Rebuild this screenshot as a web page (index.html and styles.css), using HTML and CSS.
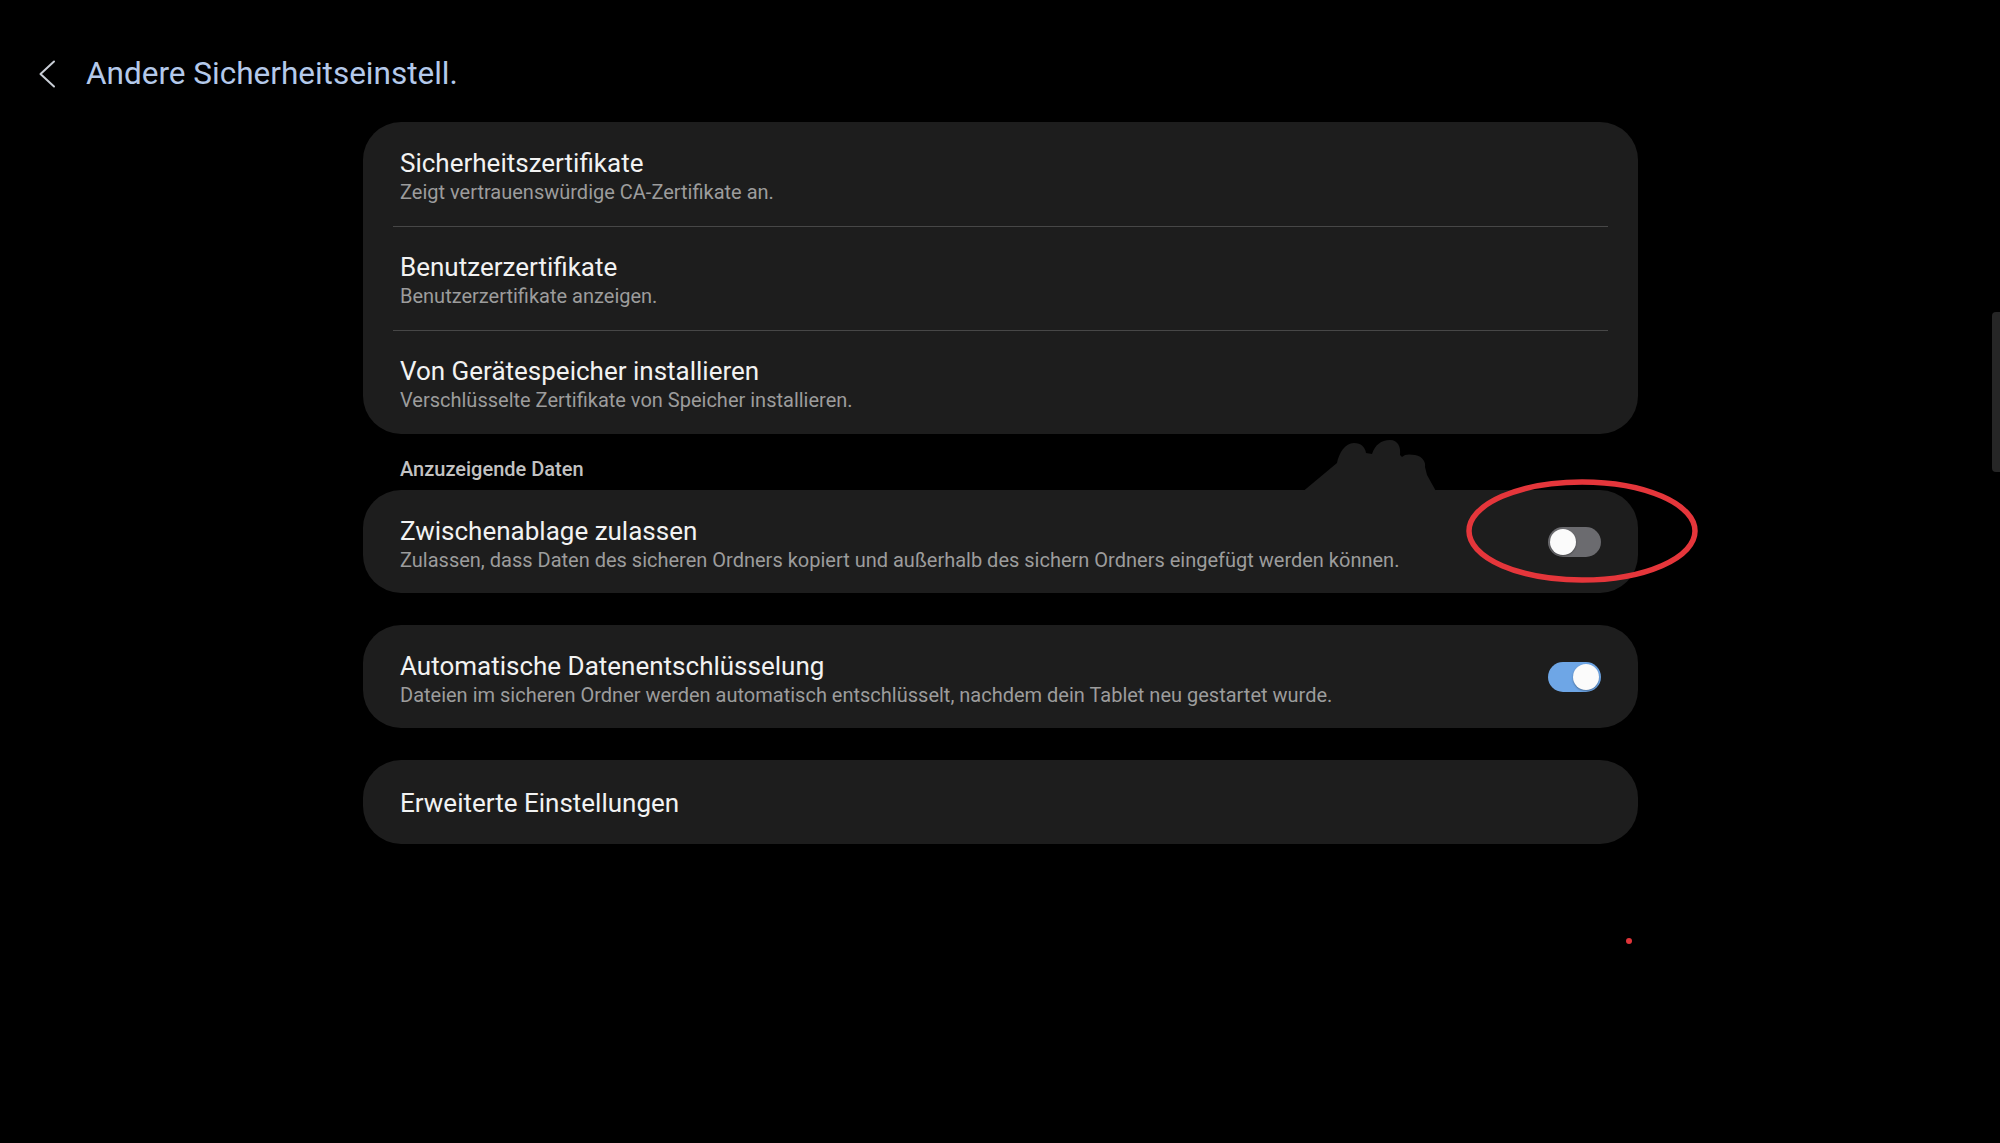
FILE: index.html
```html
<!DOCTYPE html>
<html lang="de">
<head>
<meta charset="utf-8">
<title>Andere Sicherheitseinstell.</title>
<link rel="stylesheet" href="styles.css">
</head>
<body>
<div class="screen">
  <header class="topbar">
    <span class="back" aria-label="Zurück">
      <svg width="18" height="28" viewBox="0 0 18 28"><path d="M16 1.5 L2.5 14 L16 26.5" fill="none" stroke="#c9ced6" stroke-width="2" stroke-linecap="round" stroke-linejoin="round"/></svg>
    </span>
    <h1 class="title">Andere Sicherheitseinstell.</h1>
  </header>

  <main class="content">
    <section class="card card-list">
      <div class="row">
        <div class="row-text">
          <div class="row-title">Sicherheitszertifikate</div>
          <div class="row-sub">Zeigt vertrauenswürdige CA-Zertifikate an.</div>
        </div>
      </div>
      <div class="divider"></div>
      <div class="row">
        <div class="row-text">
          <div class="row-title">Benutzerzertifikate</div>
          <div class="row-sub">Benutzerzertifikate anzeigen.</div>
        </div>
      </div>
      <div class="divider"></div>
      <div class="row">
        <div class="row-text">
          <div class="row-title">Von Gerätespeicher installieren</div>
          <div class="row-sub">Verschlüsselte Zertifikate von Speicher installieren.</div>
        </div>
      </div>
    </section>

    <div class="section-label">Anzuzeigende Daten</div>

    <section class="card card-marked">
      <svg class="hand" width="150" height="62" viewBox="0 0 150 62"><path d="M4 58 L40 28 C42 18 48 8 57 8 C64 8 68 12 69 18 L75 19 C78 10 84 5 93 5 C101 5 104 12 103 20 L105 22 C108 19 112 19 118 20 C126 21 129 28 128 32 L130 40 L140 58 Z" fill="#1d1d1d"/></svg>
      <div class="row row-switch">
        <div class="row-text">
          <div class="row-title">Zwischenablage zulassen</div>
          <div class="row-sub">Zulassen, dass Daten des sicheren Ordners kopiert und außerhalb des sichern Ordners eingefügt werden können.</div>
        </div>
        <span class="toggle"><span class="knob"></span></span>
      </div>
      <svg class="annotation" width="240" height="112" viewBox="0 0 240 112"><ellipse cx="120" cy="56" rx="113" ry="49" fill="none" stroke="#e5363b" stroke-width="5.5"/></svg>
    </section>

    <section class="card">
      <div class="row row-switch">
        <div class="row-text">
          <div class="row-title">Automatische Datenentschlüsselung</div>
          <div class="row-sub">Dateien im sicheren Ordner werden automatisch entschlüsselt, nachdem dein Tablet neu gestartet wurde.</div>
        </div>
        <span class="toggle toggle-on"><span class="knob"></span></span>
      </div>
    </section>

    <section class="card">
      <div class="row row-single">
        <div class="row-title">Erweiterte Einstellungen</div>
      </div>
    </section>
  </main>

  <div class="scrollbar"></div>
  <div class="dot"></div>
</div>
</body>
</html>
```

FILE: styles.css
```css
* { box-sizing: border-box; }

html, body {
  margin: 0;
  padding: 0;
  background: #000;
}

body {
  font-family: Roboto, "Noto Sans", "DejaVu Sans", sans-serif;
  color: #f2f2f2;
}

.screen {
  position: relative;
  width: 2000px;
  height: 1143px;
  overflow: hidden;
  background: #000;
}

.topbar {
  display: flex;
  align-items: center;
  height: 122px;
  padding: 56px 0 30px 38px;
}

.back {
  display: flex;
  width: 18px;
  height: 28px;
  margin-right: 30px;
}

.title {
  margin: 0;
  font-size: 31.5px;
  line-height: 36px;
  font-weight: 400;
  color: #b4c9ea;
}

.content {
  width: 1275px;
  margin-left: 363px;
  display: flex;
  flex-direction: column;
}

.card {
  position: relative;
  background: #1d1d1d;
  border-radius: 38px;
}

.card + .card {
  margin-top: 32px;
}

.row {
  padding: 25px 37px 0 37px;
  height: 103px;
}

.card-list .row:first-child {
  height: 104px;
  padding-top: 26px;
}

.row-switch {
  display: flex;
  align-items: center;
  justify-content: space-between;
  padding-top: 0;
  padding-bottom: 0;
}

.row-switch .row-text {
  padding-top: 6px;
}

.row-title {
  font-size: 26px;
  line-height: 30px;
  color: #f2f2f2;
}

.row-sub {
  font-size: 20px;
  line-height: 28px;
  color: #9c9c9c;
}

.row-single {
  height: 84px;
  padding-top: 28px;
  padding-bottom: 0;
}

.divider {
  height: 1px;
  margin: 0 30px;
  background: #474747;
}

.section-label {
  margin: 23px 0 9px 37px;
  font-size: 20px;
  line-height: 24px;
  font-weight: 500;
  color: #c2c2c2;
}

.toggle {
  flex: none;
  display: flex;
  align-items: center;
  width: 53px;
  height: 30px;
  padding: 2px;
  border-radius: 15px;
  background: #6b6b6f;
}

.toggle-on {
  justify-content: flex-end;
  background: #6ea6e6;
}

.knob {
  width: 26px;
  height: 26px;
  border-radius: 50%;
  background: #fbfbfb;
  box-shadow: 0 1px 2px rgba(0, 0, 0, 0.35);
}

.hand {
  position: absolute;
  left: 934px;
  top: -55px;
}

.annotation {
  position: absolute;
  left: 1099px;
  top: -15px;
}

.scrollbar {
  position: absolute;
  right: 0;
  top: 312px;
  width: 8px;
  height: 160px;
  border-radius: 4px 0 0 4px;
  background: #262626;
}

.dot {
  position: absolute;
  left: 1626px;
  top: 938px;
  width: 6px;
  height: 6px;
  border-radius: 50%;
  background: #e0353a;
}
```
